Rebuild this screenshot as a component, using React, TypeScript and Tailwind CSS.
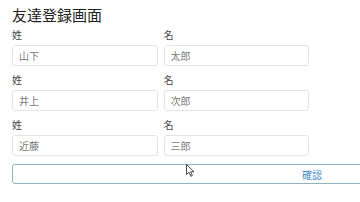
import React from 'react';

const rows = [
    { sei: '山下', mei: '太郎' },
    { sei: '井上', mei: '次郎' },
    { sei: '近藤', mei: '三郎' },
];

export default function App() {
    return (
        <div className="relative w-[360px] h-[202px] overflow-hidden bg-white px-3 pt-[5px] text-[#444] font-['Noto_Sans_CJK_JP','Noto_Sans',sans-serif]">
            <h1 className="text-[15px] leading-[20px] font-normal text-[#222]">友達登録画面</h1>

            <div className="flex flex-col gap-[8px] mt-[4px] w-[297px]">
                {rows.map((row, i) => (
                    <div key={i} className="flex gap-[6px]">
                        <div className="flex-1">
                            <div className="text-[10px] leading-[12px] mb-[4px]">姓</div>
                            <input
                                readOnly
                                value={row.sei}
                                className="block w-full h-[21px] px-[6px] text-[10px] text-[#7a7a7a] border border-[#e5e5e5] rounded-[3px] outline-none"
                            />
                        </div>
                        <div className="flex-1">
                            <div className="text-[10px] leading-[12px] mb-[4px]">名</div>
                            <input
                                readOnly
                                value={row.mei}
                                className="block w-full h-[21px] px-[6px] text-[10px] text-[#7a7a7a] border border-[#e5e5e5] rounded-[3px] outline-none"
                            />
                        </div>
                    </div>
                ))}
            </div>

            <button className="block mt-[8px] w-[600px] h-[20px] border border-[#8fb4bf] rounded-[3px] text-[10px] text-[#4a8ac4] bg-white">
                確認
            </button>

            {/* mouse cursor */}
            <svg className="absolute left-[186px] top-[164px]" width="9" height="13" viewBox="0 0 9 13">
                <path d="M0.5 0.5 L0.5 10.5 L3 8.3 L4.8 12.3 L6.3 11.6 L4.6 7.8 L8 7.8 Z" fill="white" stroke="#333" strokeWidth="0.9" strokeLinejoin="round" />
            </svg>
        </div>
    );
}
